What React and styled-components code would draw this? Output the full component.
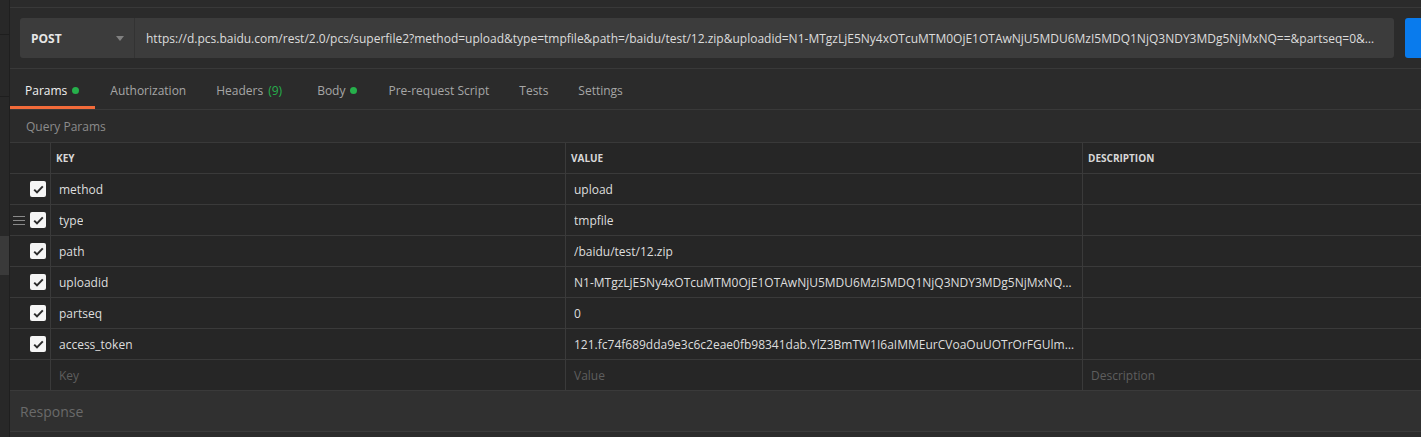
import React from "react";
import styled, { createGlobalStyle } from "styled-components";

const GlobalStyle = createGlobalStyle`
  html, body {
    margin: 0;
    padding: 0;
    background: #2b2b2b;
    font-family: "Open Sans", "Liberation Sans", sans-serif;
    overflow: hidden;
  }
  * {
    box-sizing: border-box;
  }
`;

const url =
  "https://d.pcs.baidu.com/rest/2.0/pcs/superfile2?method=upload&type=tmpfile&path=/baidu/test/12.zip&uploadid=N1-MTgzLjE5Ny4xOTcuMTM0OjE1OTAwNjU5MDU6MzI5MDQ1NjQ3NDY3MDg5NjMxNQ==&partseq=0&access_token=121.fc74f689dda9e3c6c2eae0fb98341dab";

const params = [
  { key: "method", value: "upload" },
  { key: "type", value: "tmpfile", hover: true },
  { key: "path", value: "/baidu/test/12.zip" },
  {
    key: "uploadid",
    value:
      "N1-MTgzLjE5Ny4xOTcuMTM0OjE1OTAwNjU5MDU6MzI5MDQ1NjQ3NDY3MDg5NjMxNQ==",
  },
  { key: "partseq", value: "0" },
  {
    key: "access_token",
    value:
      "121.fc74f689dda9e3c6c2eae0fb98341dab.YlZ3BmTW1I6aIMMEurCVoaOuUOTrOrFGUlmQwXyZ",
  },
];

const tabs = [
  { label: "Params", active: true, dot: true },
  { label: "Authorization" },
  { label: "Headers", count: "(9)" },
  { label: "Body", dot: true },
  { label: "Pre-request Script" },
  { label: "Tests" },
  { label: "Settings" },
];

const Page = styled.div`
  display: flex;
  width: 1421px;
  height: 437px;
`;

const Sidebar = styled.div`
  width: 10px;
  flex-shrink: 0;
  background: #282828;
  border-right: 1px solid #1f1f1f;
  display: flex;
  flex-direction: column;
`;

const SideBlock = styled.div`
  height: ${({ h }) => h}px;
  flex-shrink: 0;
  background: ${({ light }) => (light ? "#3a3a3a" : "#282828")};
  border-bottom: ${({ line }) => (line ? "1px solid #1e1e1e" : "none")};
`;

const Main = styled.div`
  flex: 1;
  min-width: 0;
  display: flex;
  flex-direction: column;
`;

const TopStrip = styled.div`
  height: 8px;
  border-bottom: 1px solid #393939;
`;

const UrlArea = styled.div`
  display: flex;
  gap: 11px;
  padding: 10px 0 10px 10px;
  border-bottom: 1px solid #393939;
`;

const UrlBar = styled.div`
  flex: 1;
  min-width: 0;
  height: 40px;
  display: flex;
  align-items: center;
  background: #3c3c3c;
  border-radius: 3px;
`;

const MethodBox = styled.div`
  width: 115px;
  flex-shrink: 0;
  height: 100%;
  display: flex;
  align-items: center;
  justify-content: space-between;
  padding: 0 10px 0 11px;
  border-right: 1px solid #333;
  color: #e6e6e6;
  font-size: 12px;
  font-weight: 700;
`;

const Caret = styled.span`
  width: 0;
  height: 0;
  border-left: 4px solid transparent;
  border-right: 4px solid transparent;
  border-top: 5px solid #808080;
`;

const UrlText = styled.div`
  flex: 1;
  min-width: 0;
  padding: 0 14px 0 11px;
  color: #dcdcdc;
  font-size: 12px;
  white-space: nowrap;
  overflow: hidden;
  text-overflow: ellipsis;
`;

const SendButton = styled.div`
  width: 16px;
  height: 40px;
  flex-shrink: 0;
  background: #097bed;
  border-radius: 3px 0 0 3px;
`;

const TabRow = styled.div`
  display: flex;
  height: 41px;
  border-bottom: 1px solid #393939;
`;

const Tab = styled.div`
  display: flex;
  align-items: center;
  gap: 5px;
  padding: 3px 15px 0;
  font-size: 12px;
  color: ${({ active }) => (active ? "#f0f0f0" : "#a6a6a6")};
  box-shadow: ${({ active }) => (active ? "inset 0 -3px 0 #f26b3a" : "none")};
`;

const Dot = styled.span`
  width: 7px;
  height: 7px;
  margin-right: 1px;
  border-radius: 50%;
  background: #26b04b;
`;

const Count = styled.span`
  margin-right: 5px;
  color: #26b04b;
`;

const SectionTitle = styled.div`
  height: 33px;
  display: flex;
  align-items: center;
  padding-left: 16px;
  font-size: 12px;
  color: #8c8c8c;
  border-bottom: 1px solid #393939;
`;

const Table = styled.div`
  display: grid;
  grid-template-columns: 41px 515px 517px 1fr;
  background: #262626;
`;

const Cell = styled.div`
  height: 31px;
  display: flex;
  align-items: center;
  gap: 4px;
  justify-content: ${({ check }) => (check ? "flex-end" : "flex-start")};
  padding: ${({ check, head }) =>
    check ? "0 4px 0 0" : head ? "0 5px" : "0 8px"};
  border-bottom: 1px solid #3a3a3a;
  border-right: ${({ last }) => (last ? "none" : "1px solid #3a3a3a")};
  font-size: ${({ head }) => (head ? "10px" : "12px")};
  font-weight: ${({ head }) => (head ? 700 : 400)};
  color: ${({ head, placeholder }) =>
    placeholder ? "#5e5e5e" : head ? "#d8d8d8" : "#dedede"};
  min-width: 0;
`;

const CellText = styled.span`
  white-space: nowrap;
  overflow: hidden;
  text-overflow: ellipsis;
`;

const Checkbox = styled.span`
  width: 16px;
  height: 16px;
  border-radius: 2px;
  background: #f5f5f5;
  display: flex;
  align-items: center;
  justify-content: center;
`;

const Handle = styled.span`
  width: 12px;
  height: 9px;
  margin-right: 1px;
  display: flex;
  flex-direction: column;
  justify-content: space-between;
  & > i {
    display: block;
    height: 1px;
    background: #8a8a8a;
  }
`;

const ResponseBar = styled.div`
  height: 41px;
  display: flex;
  align-items: center;
  padding-left: 10px;
  background: #303030;
  border-bottom: 1px solid #3a3a3a;
  color: #6a6a6a;
  font-size: 14px;
`;

const Check = () => (
  <svg width="11" height="9" viewBox="0 0 11 9">
    <path
      d="M1.2 4.6 L4 7.4 L9.8 1.4"
      fill="none"
      stroke="#2b2b2b"
      strokeWidth="2"
    />
  </svg>
);

export default function App() {
  return (
    <>
      <GlobalStyle />
      <Page>
        <Sidebar>
          <SideBlock h={35} line />
          <SideBlock h={62} line />
          <SideBlock h={139} />
          <SideBlock h={39} light />
        </Sidebar>
        <Main>
          <TopStrip />
          <UrlArea>
            <UrlBar>
              <MethodBox>
                POST
                <Caret />
              </MethodBox>
              <UrlText>{url}</UrlText>
            </UrlBar>
            <SendButton />
          </UrlArea>
          <TabRow>
            {tabs.map((t) => (
              <Tab key={t.label} active={t.active}>
                {t.label}
                {t.count && <Count>{t.count}</Count>}
                {t.dot && <Dot />}
              </Tab>
            ))}
          </TabRow>
          <SectionTitle>Query Params</SectionTitle>
          <Table>
            <Cell head check />
            <Cell head>KEY</Cell>
            <Cell head>VALUE</Cell>
            <Cell head last>
              DESCRIPTION
            </Cell>
            {params.map((p) => (
              <React.Fragment key={p.key}>
                <Cell check>
                  {p.hover && (
                    <Handle>
                      <i />
                      <i />
                      <i />
                    </Handle>
                  )}
                  <Checkbox>
                    <Check />
                  </Checkbox>
                </Cell>
                <Cell>
                  <CellText>{p.key}</CellText>
                </Cell>
                <Cell>
                  <CellText>{p.value}</CellText>
                </Cell>
                <Cell last />
              </React.Fragment>
            ))}
            <Cell check />
            <Cell placeholder>Key</Cell>
            <Cell placeholder>Value</Cell>
            <Cell placeholder last>
              Description
            </Cell>
          </Table>
          <ResponseBar>Response</ResponseBar>
        </Main>
      </Page>
    </>
  );
}
